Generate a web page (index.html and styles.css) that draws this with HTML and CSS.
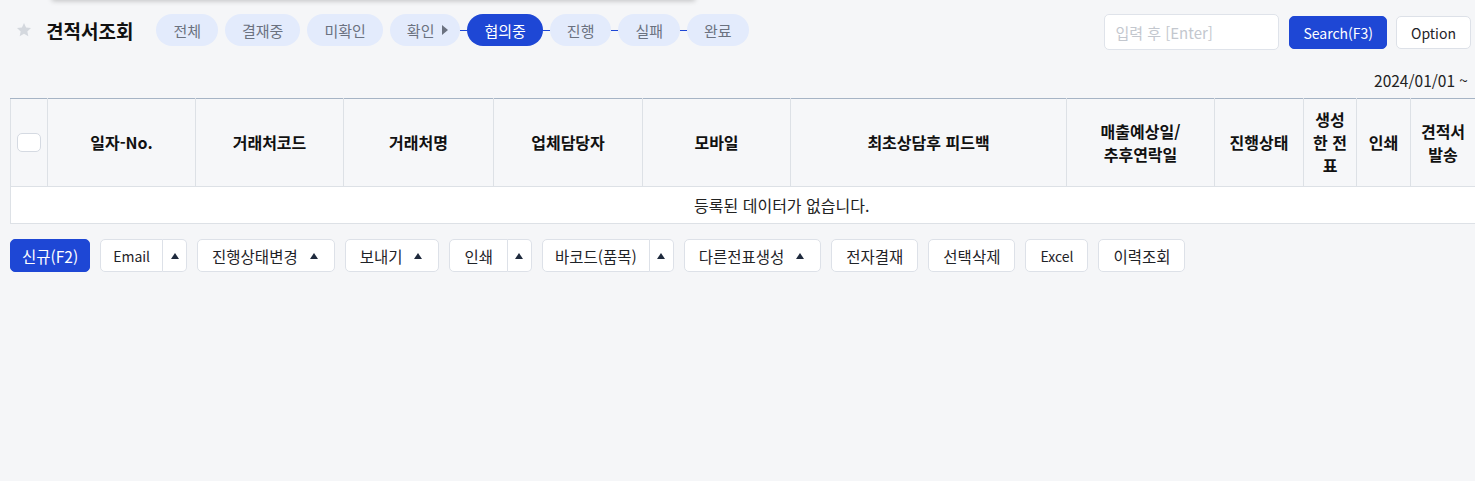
FILE: index.html
```html
<!DOCTYPE html>
<html lang="ko">
<head>
    <meta charset="UTF-8">
    <meta name="viewport" content="width=device-width, initial-scale=1.0">
    <title>견적서조회</title>
    <link rel="stylesheet" href="styles.css">
</head>
<body>
    <div class="top-shadow"></div>
    <div class="page">
        <div class="toolbar">
            <div class="title-group">
                <svg class="star" width="16" height="16" viewBox="0 0 24 24">
                    <polygon points="12,1.5 15.1,8.3 22.5,9.1 17,14.1 18.5,21.5 12,17.8 5.5,21.5 7,14.1 1.5,9.1 8.9,8.3" fill="#d4d8de"/>
                </svg>
                <h1 class="title">견적서조회</h1>
                <nav class="steps">
                    <a class="pill gap">전체</a>
                    <a class="pill gap">결재중</a>
                    <a class="pill gap">미확인</a>
                    <a class="pill has-caret">확인<span class="caret-right"></span></a>
                    <span class="link"></span>
                    <a class="pill active">협의중</a>
                    <span class="link"></span>
                    <a class="pill">진행</a>
                    <span class="link"></span>
                    <a class="pill">실패</a>
                    <span class="link"></span>
                    <a class="pill">완료</a>
                </nav>
            </div>
            <div class="search-group">
                <input class="search-input" type="text" placeholder="입력 후 [Enter]">
                <button class="btn primary en search">Search(F3)</button>
                <button class="btn en">Option</button>
            </div>
        </div>

        <div class="period">2024/01/01 ~</div>

        <div class="grid-wrap">
            <table class="grid">
                <colgroup>
                    <col style="width:37px">
                    <col style="width:148px">
                    <col style="width:148px">
                    <col style="width:150px">
                    <col style="width:149px">
                    <col style="width:148px">
                    <col style="width:276px">
                    <col style="width:148px">
                    <col style="width:89px">
                    <col style="width:53px">
                    <col style="width:54px">
                    <col style="width:65px">
                    <col style="width:77px">
                </colgroup>
                <thead>
                    <tr>
                        <th><input class="check" type="checkbox"></th>
                        <th>일자-No.</th>
                        <th>거래처코드</th>
                        <th>거래처명</th>
                        <th>업체담당자</th>
                        <th>모바일</th>
                        <th>최초상담후 피드백</th>
                        <th>매출예상일/<br>추후연락일</th>
                        <th>진행상태</th>
                        <th>생성<br>한 전<br>표</th>
                        <th>인쇄</th>
                        <th>견적서<br>발송</th>
                        <th></th>
                    </tr>
                </thead>
                <tbody>
                    <tr>
                        <td class="empty" colspan="13">등록된 데이터가 없습니다.</td>
                    </tr>
                </tbody>
            </table>
        </div>

        <div class="actions">
            <button class="btn primary new">신규(F2)</button>
            <div class="split">
                <button class="btn en tight">Email</button>
                <button class="btn arrow"><span class="caret-up"></span></button>
            </div>
            <button class="btn drop">진행상태변경<span class="caret-up"></span></button>
            <button class="btn drop">보내기<span class="caret-up"></span></button>
            <div class="split">
                <button class="btn">인쇄</button>
                <button class="btn arrow"><span class="caret-up"></span></button>
            </div>
            <div class="split">
                <button class="btn tight">바코드(품목)</button>
                <button class="btn arrow"><span class="caret-up"></span></button>
            </div>
            <button class="btn drop">다른전표생성<span class="caret-up"></span></button>
            <button class="btn">전자결재</button>
            <button class="btn">선택삭제</button>
            <button class="btn en">Excel</button>
            <button class="btn">이력조회</button>
        </div>
    </div>
</body>
</html>
```

FILE: styles.css
```css
body {
    margin: 0;
    background-color: #f5f6f8;
    font-family: "Noto Sans CJK KR", "Noto Sans", sans-serif;
    color: #1f2328;
    overflow: hidden;
}
.top-shadow {
    position: absolute;
    top: -20px;
    left: 52px;
    width: 643px;
    height: 20px;
    background: #f5f6f8;
    box-shadow: 0 1px 5px rgba(0, 0, 0, 0.22);
}
.page {
    padding: 14px 4px 0 10px;
}
.toolbar {
    display: flex;
    justify-content: space-between;
    align-items: flex-start;
}
.title-group {
    display: flex;
    align-items: center;
    height: 32px;
}
.star {
    margin-left: 6px;
}
.title {
    margin: 0 23px 0 14px;
    font-size: 19px;
    font-weight: 700;
    color: #111;
}
.steps {
    display: flex;
    align-items: center;
}
.pill {
    display: flex;
    align-items: center;
    height: 32px;
    padding: 0 17px;
    border-radius: 16px;
    background-color: #e3ebfc;
    color: #6b7280;
    font-size: 15px;
}
.pill.gap {
    margin-right: 7px;
}
.pill.has-caret {
    padding-right: 12px;
}
.pill.active {
    background-color: #1e47d5;
    color: #fff;
}
.caret-right {
    margin-left: 8px;
    border-top: 5px solid transparent;
    border-bottom: 5px solid transparent;
    border-left: 6px solid #6b7280;
}
.link {
    width: 7px;
    height: 1px;
    background-color: #1e47d5;
}
.search-group {
    display: flex;
    align-items: flex-start;
}
.search-input {
    box-sizing: border-box;
    width: 175px;
    height: 36px;
    margin-right: 10px;
    padding: 0 10px;
    border: 1px solid #dfe3ea;
    border-radius: 5px;
    background: #fff;
    font-family: inherit;
    font-size: 15px;
}
.search-input::placeholder {
    color: #c3c7ce;
}
.btn {
    box-sizing: border-box;
    height: 33px;
    padding: 0 14px;
    border: 1px solid #dde1e8;
    border-radius: 5px;
    background-color: #fff;
    color: #1f2328;
    font-family: inherit;
    font-size: 15.5px;
    display: inline-flex;
    align-items: center;
    white-space: nowrap;
}
.btn.en {
    font-size: 14px;
}
.btn.tight {
    padding: 0 12px;
}
.btn.new {
    padding: 0 11px;
}
.search-group .btn {
    margin-top: 2px;
}
.search-group .btn.search {
    padding: 0 13px;
}
.search-group .btn + .btn {
    margin-left: 9px;
}
.btn.primary {
    background-color: #1e47d5;
    border-color: #1e47d5;
    color: #fff;
}
.period {
    margin-top: 20px;
    height: 20px;
    line-height: 20px;
    text-align: right;
    padding-right: 3px;
    font-size: 15.5px;
    color: #222;
}
.grid-wrap {
    margin-top: 8px;
    margin-right: -4px;
    overflow: hidden;
}
.grid {
    width: 1542px;
    table-layout: fixed;
    border-collapse: collapse;
    background-color: #fff;
    border-top: 1px solid #a6b4c5;
    border-left: 1px solid #dde1e6;
}
.grid th {
    height: 87px;
    padding: 0 6px;
    background-color: #f6f7f9;
    border-right: 1px solid #dde1e6;
    border-bottom: 1px solid #dde1e6;
    font-size: 16px;
    font-weight: 700;
    line-height: 23px;
    color: #111;
    text-align: center;
}
.grid th:first-child {
    padding: 0 0 0 6px;
    text-align: left;
}
.check {
    appearance: none;
    display: block;
    width: 24px;
    height: 19px;
    margin: 0;
    border: 1px solid #d5dae2;
    border-radius: 5px;
    background-color: #fff;
}
.grid td.empty {
    height: 36px;
    padding: 0;
    line-height: 20px;
    border-bottom: 1px solid #dde1e6;
    text-align: center;
    font-size: 16px;
    color: #222;
}
.actions {
    display: flex;
    gap: 10px;
    margin-top: 15px;
}
.split {
    display: flex;
}
.split .btn:first-child {
    border-radius: 5px 0 0 5px;
    border-right: 1px solid #dde1e8;
}
.split .btn.arrow {
    width: 24px;
    padding: 0;
    justify-content: center;
    border-left: none;
    border-radius: 0 5px 5px 0;
}
.btn.drop {
    padding-right: 16px;
}
.btn.drop .caret-up {
    margin-left: 12px;
}
.caret-up {
    width: 0;
    height: 0;
    border-left: 4px solid transparent;
    border-right: 4px solid transparent;
    border-bottom: 6px solid #1f2a3d;
}
```
